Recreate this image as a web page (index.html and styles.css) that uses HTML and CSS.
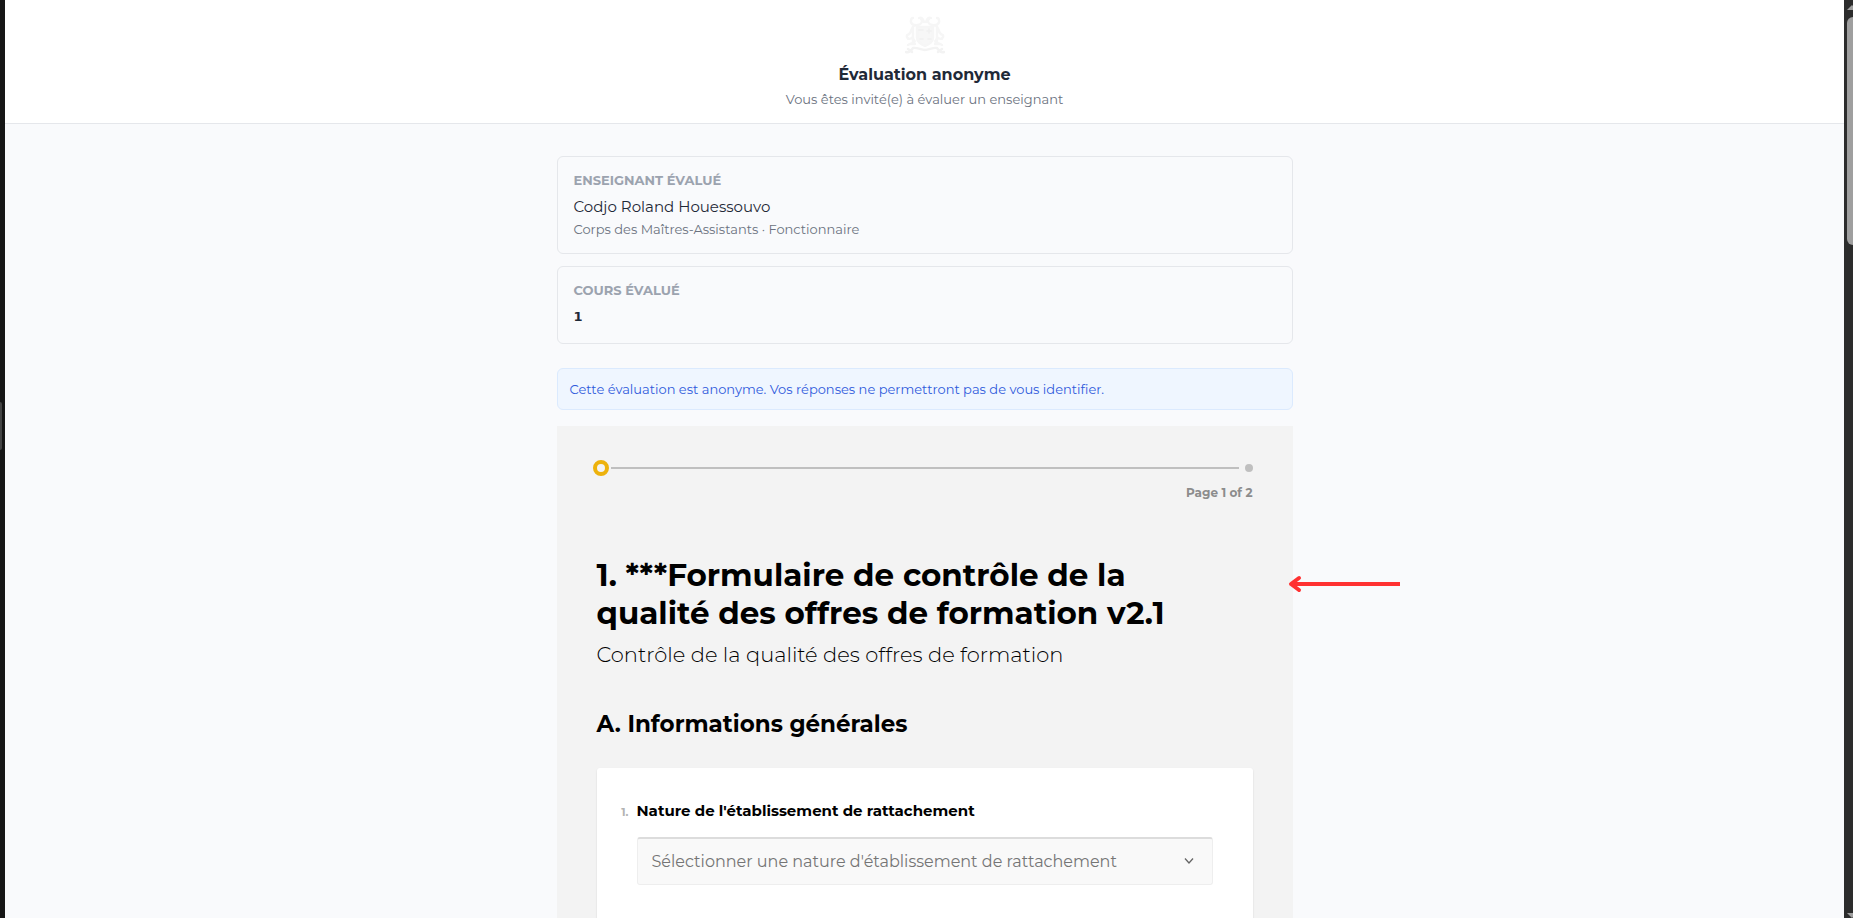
FILE: index.html
```
<!DOCTYPE html>
<html lang="fr">
<head>
<meta charset="utf-8">
<meta name="viewport" content="width=device-width, initial-scale=1">
<title>Évaluation anonyme</title>
<link rel="stylesheet" href="styles.css">
</head>
<body>
<div class="window">
  <div class="edge"><span class="edge-handle"></span></div>
  <div class="page">
    <header class="header">
      <svg class="emblem" viewBox="0 0 40 40" fill="none" stroke="#f6f6f6" stroke-width="2.400" stroke-linecap="round" aria-hidden="true">
        <path d="M6 5c-1 4 3 6 7 5s5-4 3-6M34 5c1 4-3 6-7 5s-5-4-3-6M8 3c-2 0-2 2-2 3M32 3c2 0 2 2 2 3M14 3c2-1 4 0 5 4M26 3c-2-1-4 0-5 4"/>
        <path d="M12 12h16v11c0 4-4 6-8 8-4-2-8-4-8-8z" fill="#f7f7f7"/>
        <path d="M10 10c-4 2-3 5-5 8s-4 1-3 4 4 2 6 0M7 15c3 4-1 7 2 10s-4 3-6 5M30 10c4 2 3 5 5 8s4 1 3 4-4 2-6 0M33 15c-3 4 1 7-2 10s4 3 6 5M5 29h5M30 29h5M8 12v16M32 12v16"/>
        <path d="M14 15h4M22 16h4M24 14v4M15 24h3M23 24h3" stroke="#f1f1f1" stroke-width="1.500"/>
        <path d="M1 37c3 1 5-1 7-4 4-1 8 2 12 2s8-3 12-2c2 3 4 5 7 4M3 34l4 3M37 34l-4 3" stroke="#f3f3f3"/>
      </svg>
      <h1 class="header-title">Évaluation anonyme</h1>
      <p class="header-text">Vous êtes invité(e) à évaluer un enseignant</p>
    </header>
    <main class="content">
      <section class="card">
        <h2 class="card-label">ENSEIGNANT ÉVALUÉ</h2>
        <p class="card-name">Codjo Roland Houessouvo</p>
        <p class="card-detail">Corps des Maîtres-Assistants · Fonctionnaire</p>
      </section>
      <section class="card">
        <h2 class="card-label">COURS ÉVALUÉ</h2>
        <p class="card-name card-name-strong">1</p>
      </section>
      <p class="notice">Cette évaluation est anonyme. Vos réponses ne permettront pas de vous identifier.</p>
      <form class="form">
        <div class="progress">
          <span class="step-current"></span>
          <span class="step-line"></span>
          <span class="step-next"></span>
        </div>
        <p class="page-count">Page 1 of 2</p>
        <h2 class="form-title">1. ***Formulaire de contrôle de la<br>qualité des offres de formation v2.1</h2>
        <p class="form-subtitle">Contrôle de la qualité des offres de formation</p>
        <h3 class="section-title">A. Informations générales</h3>
        <div class="question">
          <span class="question-number">1.</span>
          <div class="question-body">
            <label class="question-label" for="nature">Nature de l'établissement de rattachement</label>
            <div class="select-wrap">
              <select class="select" id="nature">
                <option>Sélectionner une nature d'établissement de rattachement</option>
              </select>
              <svg class="chevron" viewBox="0 0 10 8" fill="none" stroke="#666" stroke-width="1.3" aria-hidden="true"><path d="M1 1.500l4 4.500 4-4.500"/></svg>
            </div>
          </div>
        </div>
        <svg class="arrow" viewBox="0 0 112 18" fill="none" stroke="#ff3131" stroke-width="4" aria-hidden="true"><path d="M4 9h108"/><path d="M11 3L3 9l8 6" stroke-linecap="round" stroke-linejoin="round"/></svg>
      </form>
    </main>
  </div>
  <div class="scrollbar"><span class="scroll-up"></span><span class="scroll-thumb"></span><span class="scroll-down"></span></div>
</div>
</body>
</html>
```
FILE: styles.css
```
* { box-sizing: border-box; }
body, h1, h2, h3, p { margin: 0; }
body {
  font-family: Montserrat, Inter, sans-serif;
  color: #1f2937;
  background: #f9fafb;
}
.window { display: flex; height: 100vh; overflow: hidden; }
.edge {
  display: flex;
  align-items: center;
  width: 5px;
  background: #161616;
}
.edge-handle {
  width: 2px;
  height: 48px;
  margin-top: -66px;
  border-radius: 0 2px 2px 0;
  background: #444;
}
.page { flex: 1; overflow: hidden; background: #f9fafc; }
.header {
  display: flex;
  flex-direction: column;
  align-items: center;
  padding: 15px 16px;
  border-bottom: 1px solid #e5e7eb;
  background: #fff;
}
.emblem { width: 40px; height: 40px; }
.header-title { margin-top: 8px; font-size: 16px; line-height: 24px; font-weight: 700; }
.header-text { margin-top: 3px; font-size: 13px; line-height: 18px; color: #6b7280; }
.content { max-width: 768px; margin: 0 auto; padding: 32px 16px; }
.card {
  margin-bottom: 12px;
  padding: 15px 16px 16px;
  border: 1px solid #e5e7eb;
  border-radius: 6px;
}
.card-label { font-size: 13px; line-height: 16px; font-weight: 700; color: #9ca3af; }
.card-name { margin-top: 9px; font-size: 15px; line-height: 20px; }
.card-name-strong { font-family: "DejaVu Sans", sans-serif; font-size: 13px; font-weight: 700; }
.card-detail { margin-top: 4px; font-size: 13px; line-height: 16px; color: #6b7280; }
.notice {
  margin: 24px 0 16px;
  padding: 12px;
  border: 1px solid #dbeafe;
  border-radius: 6px;
  background: #eff6ff;
  color: #2f5bdc;
  font-size: 13px;
  line-height: 16px;
}
.form {
  position: relative;
  padding: 34px 40px 40px;
  background: #f3f3f3;
  color: #000;
}
.progress { display: flex; align-items: center; margin-left: -4px; }
.step-current { width: 16px; height: 16px; border: 4px solid #edb20c; border-radius: 50%; }
.step-line { flex: 1; height: 2px; margin: 0 6px 0 2px; background: #bfbfbf; }
.step-next { width: 8px; height: 8px; border-radius: 50%; background: #bfbfbf; }
.page-count { margin-top: 9px; font-size: 12px; line-height: 16px; font-weight: 700; text-align: right; color: #8c8c8c; }
.form-title { margin-top: 55px; font-size: 31px; line-height: 38px; font-weight: 700; }
.form-subtitle { margin-top: 9px; font-size: 21px; line-height: 28px; font-weight: 300; }
.section-title { margin-top: 41px; font-size: 23px; line-height: 28px; font-weight: 700; }
.question {
  display: flex;
  margin-top: 30px;
  padding: 33px 40px 80px 16px;
  border-radius: 3px;
  background: #fff;
  box-shadow: 0 1px 2px #0002;
}
.question-number { width: 24px; padding: 0 8px 0 0; font-size: 11px; line-height: 22px; font-weight: 700; text-align: right; color: #b3b3b3; }
.question-body { flex: 1; }
.question-label { display: block; font-size: 15px; line-height: 20px; font-weight: 700; }
.select-wrap { position: relative; margin-top: 16px; }
.select {
  display: block;
  width: 100%;
  height: 48px;
  padding: 0 40px 0 14px;
  border: 1px solid #eee;
  border-top: 2px solid #dcdcdc;
  border-radius: 3px;
  background: #f9f9f9;
  color: #757575;
  font-family: inherit;
  font-size: 16px;
  appearance: none;
}
.chevron { position: absolute; right: 19px; top: 20px; width: 10px; height: 8px; pointer-events: none; }
.arrow { position: absolute; left: calc(100% - 5px); top: 149px; width: 112px; height: 18px; }
.scrollbar { display: flex; flex-direction: column; width: 9px; padding: 5px 0 0 3px; overflow: hidden; background: #2c2c2c; }
.scroll-up { width: 10px; height: 5px; background: #9f9f9f; clip-path: polygon(50% 0, 100% 100%, 0 100%); }
.scroll-thumb { width: 12px; height: 228px; margin-top: 7px; border-radius: 6px; background: #9f9f9f; }
.scroll-down { width: 10px; height: 5px; margin-top: auto; background: #9f9f9f; clip-path: polygon(0 0, 100% 0, 50% 100%); }
```
